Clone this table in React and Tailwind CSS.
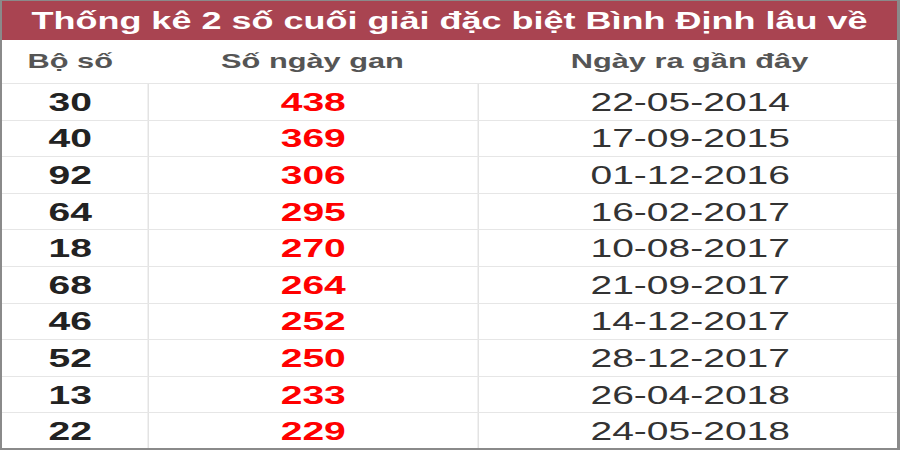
const rows = [
  ["30", "438", "22-05-2014"],
  ["40", "369", "17-09-2015"],
  ["92", "306", "01-12-2016"],
  ["64", "295", "16-02-2017"],
  ["18", "270", "10-08-2017"],
  ["68", "264", "21-09-2017"],
  ["46", "252", "14-12-2017"],
  ["52", "250", "28-12-2017"],
  ["13", "233", "26-04-2018"],
  ["22", "229", "24-05-2018"],
];

export default function App() {
  return (
    <div className="w-[900px] h-[450px] overflow-hidden bg-white border-t border-l-2 border-r-[3px] border-b-2 border-[#8a8a8a] font-['Liberation_Sans',Arial,sans-serif]">
      {/* the shot is the 600px table stretched sideways */}
      <div className="w-[596.67px] origin-top-left scale-x-150">
        <div className="h-[39px] bg-[#a94451] flex items-center justify-center text-white font-bold text-[24px] leading-none">
          Thống kê 2 số cuối giải đặc biệt Bình Định lâu về
        </div>
        <div className="grid grid-cols-[97px_220px_1fr] h-[44px] items-center text-[#555] font-bold text-[20.5px] border-b border-[#e6e6e6]">
          <div className="text-center pr-[6px]">Bộ số</div>
          <div className="text-center">Số ngày gan</div>
          <div className="text-center pl-[3px]">Ngày ra gần đây</div>
        </div>
        {rows.map(([bo, gan, ngay]) => (
          <div
            key={bo}
            className="grid grid-cols-[97px_220px_1fr] h-[36.6px] border-b border-[#e6e6e6] text-[26px] leading-none"
          >
            <div className="flex items-center justify-center pr-[6px] font-bold text-[#222]">{bo}</div>
            <div className="flex items-center justify-center border-l border-[#e3e3e3] font-bold text-[#ff0000]">{gan}</div>
            <div className="flex items-center justify-center border-l border-[#e3e3e3] pl-[3px] text-[#333]">{ngay}</div>
          </div>
        ))}
      </div>
    </div>
  );
}
